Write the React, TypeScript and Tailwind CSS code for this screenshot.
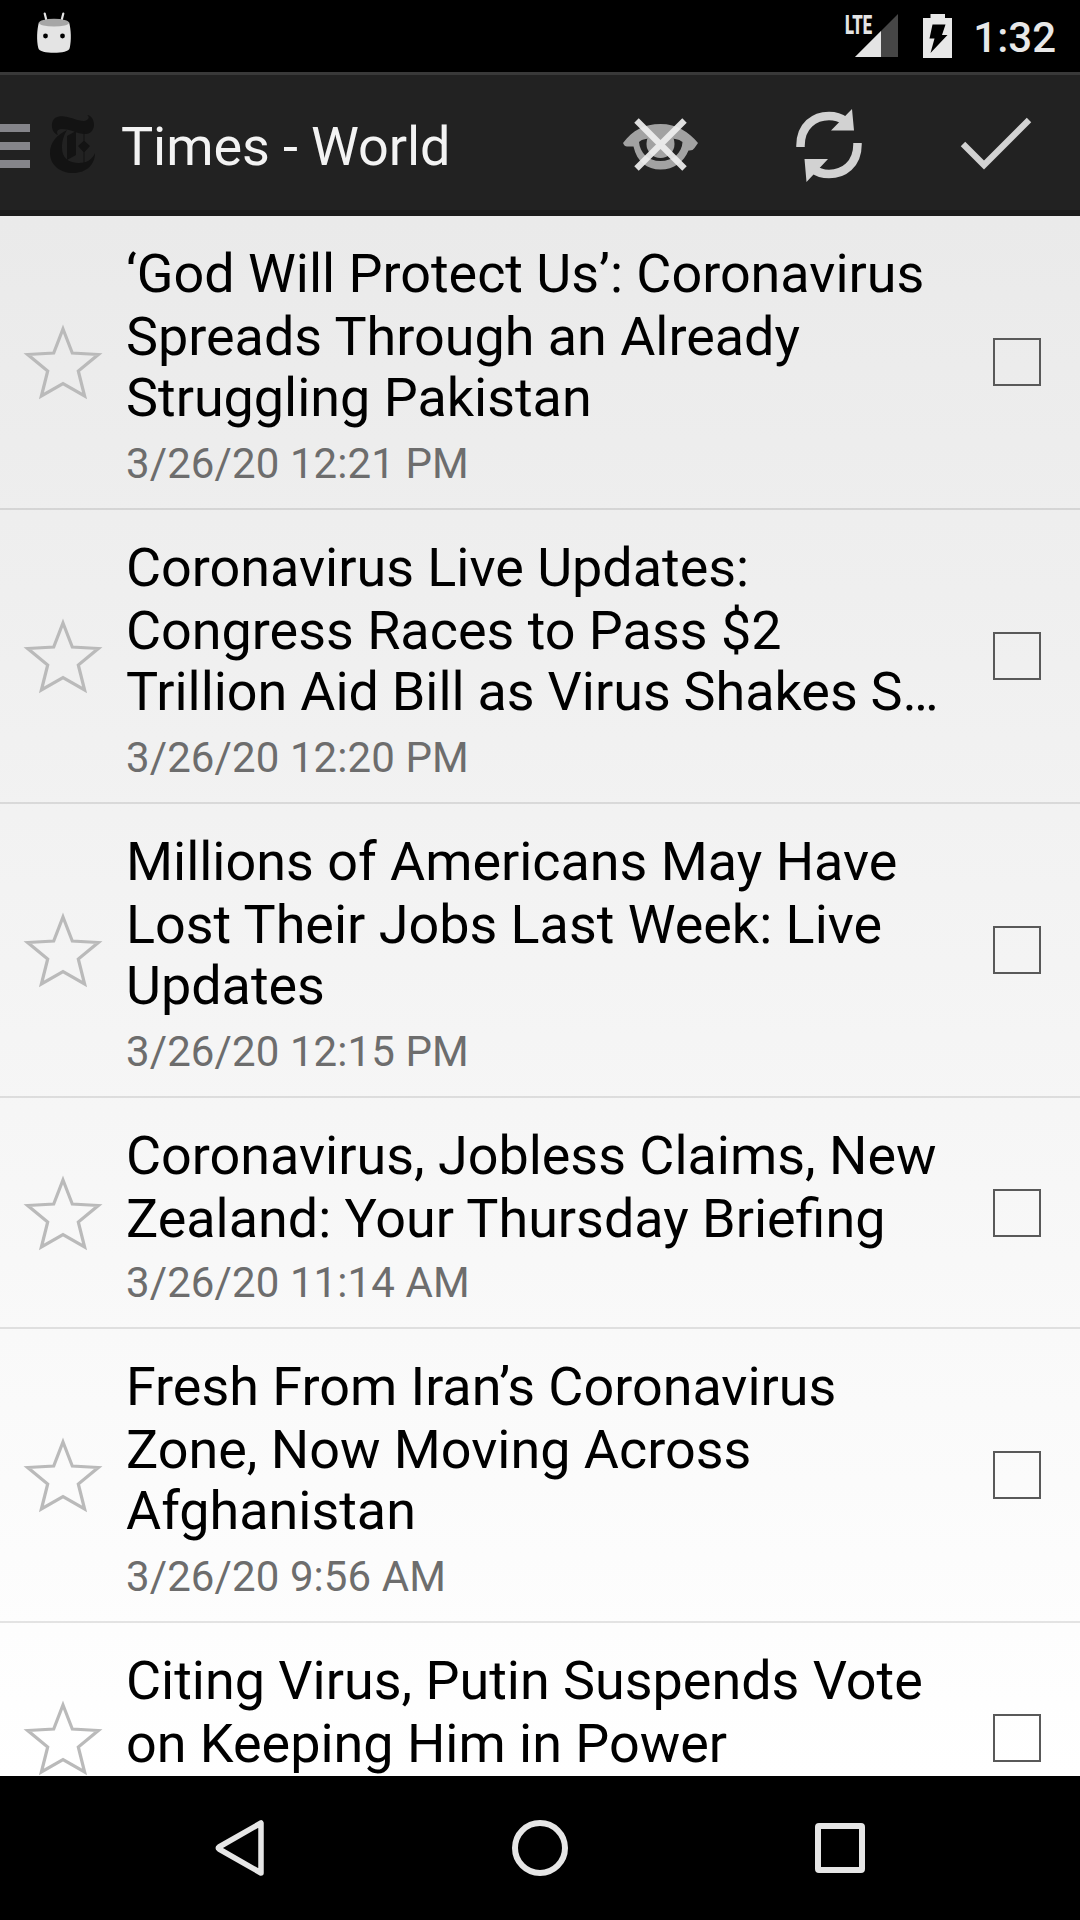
import React from "react";

type Article = { lines: string[]; date?: string };

const articles: Article[] = [
  {
    lines: ["‘God Will Protect Us’: Coronavirus", "Spreads Through an Already", "Struggling Pakistan"],
    date: "3/26/20 12:21 PM",
  },
  {
    lines: ["Coronavirus Live Updates:", "Congress Races to Pass $2", "Trillion Aid Bill as Virus Shakes S…"],
    date: "3/26/20 12:20 PM",
  },
  {
    lines: ["Millions of Americans May Have", "Lost Their Jobs Last Week: Live", "Updates"],
    date: "3/26/20 12:15 PM",
  },
  {
    lines: ["Coronavirus, Jobless Claims, New", "Zealand: Your Thursday Briefing"],
    date: "3/26/20 11:14 AM",
  },
  {
    lines: ["Fresh From Iran’s Coronavirus", "Zone, Now Moving Across", "Afghanistan"],
    date: "3/26/20 9:56 AM",
  },
  {
    lines: ["Citing Virus, Putin Suspends Vote", "on Keeping Him in Power"],
  },
];

function StatusBar() {
  return (
    <div className="flex h-[72px] shrink-0 items-start bg-black">
      <svg className="ml-9 mt-3 h-[42px] w-9" viewBox="0 0 36 42">
        <path d="M8.7 1.5l2 8M27.3 1.5l-2 8" stroke="#e4e4e4" strokeWidth="2.2" strokeLinecap="round" />
        <path d="M2.8 10.5C1 18 .4 28 2.3 36c.5 3.5 8 4.8 15.7 4.8S33.200 39.500 33.700 36c1.900-8 1.300-18-.5-25.500z" fill="#e4e4e4" />
        <ellipse cx="18" cy="10.700" rx="15" ry="3.900" fill="#a6a6a6" />
        <circle cx="9.500" cy="24" r="2.400" fill="#000" />
        <circle cx="26.500" cy="24" r="2.400" fill="#000" />
      </svg>
      <div className="ml-auto flex h-full items-start">
        <div className="relative mt-[14px] h-[44px] w-[54px]">
          <span className="absolute left-0 top-[1px] origin-left scale-x-[0.64] text-[26px] font-black leading-[20px] text-[#e4e4e4]">LTE</span>
          <svg className="absolute inset-0 h-[44px] w-[54px]" viewBox="0 0 54 44">
            <path d="M53 0v43H10z" fill="#464646" />
            <path d="M36 17v26H10z" fill="#e4e4e4" />
          </svg>
        </div>
        <svg className="ml-6 mt-[14px] h-[44px] w-[29px]" viewBox="0 0 29 44">
          <path d="M7.500 0h14.500v4H29v40H0V4h7.500z" fill="#e8e8e8" />
          <path d="M9.500 10.500h13L19 21h5.500L7.500 39l4-14.500H6.500z" fill="#000" />
        </svg>
        <span className="ml-[21px] mr-[24px] mt-[13px] text-[42px] font-medium leading-[50px] text-[#e8e8e8]">1:32</span>
      </div>
    </div>
  );
}

function ActionBar() {
  return (
    <header className="flex h-36 shrink-0 items-center border-b-[6px] border-t-[3px] border-b-[#1b1b1b] border-t-[#393939] bg-[#222222] pt-[7px]">
      <div className="flex w-[30px] flex-col gap-[10px]">
        <span className="h-2 bg-[#85858a]" />
        <span className="h-2 bg-[#85858a]" />
        <span className="h-2 bg-[#85858a]" />
      </div>
      <svg className="ml-5 mb-[4px] h-[58px] w-[46px]" viewBox="0 0 46 58" fill="#131313">
        <path d="M37 0c9 1 10 18-1 19-8 .5-15-5-24-5-5 0-6 3-4 6-7-2-8-13-3-17 9-5 20 3 29 3 5-1 6-4 3-6z" />
        <path d="M17 15C7 20 0 27 0 38c0 12 10 20 23 20 14 0 22-9 22-20-3 7-9 10-16 10-10 0-17-5-17-15 0-8 2-13 5-18z" />
        <path d="M17 21l9-5v24l-9 5zM33.500 16h1v10l5.500 5-5.500 6v11h-1V37L28 31l5.500-5z" />
      </svg>
      <h1 className="ml-[25px] mt-[2px] text-[54px] leading-[64px] tracking-[-0.1px] text-[#f3f3f3]">Times - World</h1>
      <svg className="mb-[4px] ml-auto mr-[-1px] h-[54px] w-[76px]" viewBox="0 0 76 54">
        <path
          d="M0 26C10 13 21 7 37.500 7S66 15 75 26l-3.500 5q-1.500 2.500-5 2.500h-1C61 45 51 52.500 37.500 52.500S14 45 10.500 29.500H4Q1.500 29.500 0 26zM16 25c1 11 9 19 21.500 19S59 36 59.500 25c-4-3-8-4-22-4s-18 1-21.500 4z"
          fill="#a2a2a2"
          fillRule="evenodd"
        />
        <circle cx="37.500" cy="27" r="14" fill="#a2a2a2" />
        <path d="M13.500 3.500l48 48M61.500 3.500l-48 48" stroke="#eeeeee" strokeOpacity=".93" strokeWidth="6.300" />
      </svg>
      <svg className="ml-[98px] h-[74px] w-[68px]" viewBox="0 0 68 74" fill="none">
        <path d="M4.500 38C4 16 19 7 33 7c7 0 12 2 16 5M61.500 34C62 56 47 65 33 65c-7 0-12-2-16-5" stroke="#d2d2d2" strokeWidth="8.500" />
        <path d="M56 0l2 21.500H35zM10.500 73L8.500 50H32z" fill="#d2d2d2" />
      </svg>
      <svg className="mb-[4px] ml-[96px] mr-[48px] h-[54px] w-[72px]" viewBox="0 0 72 54" fill="none">
        <path d="M3 27l21 21L69 3" stroke="#d2d2d2" strokeWidth="6.300" />
      </svg>
    </header>
  );
}

function Row({ article }: { article: Article }) {
  return (
    <li className="flex shrink-0 items-center border-b-2 border-black/10">
      <svg className="ml-[23px] h-[80px] w-[80px]" viewBox="0 0 80 80" fill="none">
        <path d="M40 7l9.300 24 26 1.500-20 16.500 6.300 25L40 61.500 18.400 74 24.700 49l-20-16.500 26-1.500z" stroke="#bababa" strokeWidth="3.200" />
      </svg>
      <div className="ml-[23px] flex-1 pb-[13px] pt-[26px]">
        <h2 className="text-[53.9px] leading-[63px] whitespace-nowrap text-black [text-rendering:optimizeLegibility]">
          {article.lines.map((line, i) => (
            <span
              key={line}
              className={`block ${i === 2 ? "-mt-[2px] pb-[2px]" : ""} ${line.length > 34 ? "[word-spacing:-0.5px]" : ""}`}
            >
              {line}
            </span>
          ))}
        </h2>
        <p className="h-[64px] pt-[1px] text-[42px] leading-[63px] tracking-[0.1px] whitespace-nowrap text-[#6d6d6d]">{article.date}</p>
      </div>
      <span className="mr-[39px] size-12 border-2 border-[#595959]" />
    </li>
  );
}

function NavBar() {
  return (
    <nav className="flex h-36 shrink-0 items-center bg-black">
      <svg className="ml-[215px] h-14 w-[50px]" viewBox="0 0 50 56" fill="none">
        <path d="M46 3v50L4 29q-1.500-1 0-2z" stroke="#e6e6e6" strokeWidth="5.500" strokeLinejoin="round" />
      </svg>
      <span className="ml-[247px] size-14 rounded-full border-[6px] border-[#e6e6e6]" />
      <span className="ml-[247px] size-[50px] rounded-[4px] border-[6px] border-[#e6e6e6]" />
    </nav>
  );
}

export default function App() {
  return (
    <div className="flex h-[1920px] w-[1080px] flex-col overflow-hidden bg-black font-['Roboto',sans-serif]">
      <StatusBar />
      <ActionBar />
      <ul className="flex min-h-0 flex-1 flex-col overflow-hidden bg-linear-to-b from-[#eaeaea] to-white">
        {articles.map((a) => (
          <Row key={a.lines[0]} article={a} />
        ))}
      </ul>
      <NavBar />
    </div>
  );
}
